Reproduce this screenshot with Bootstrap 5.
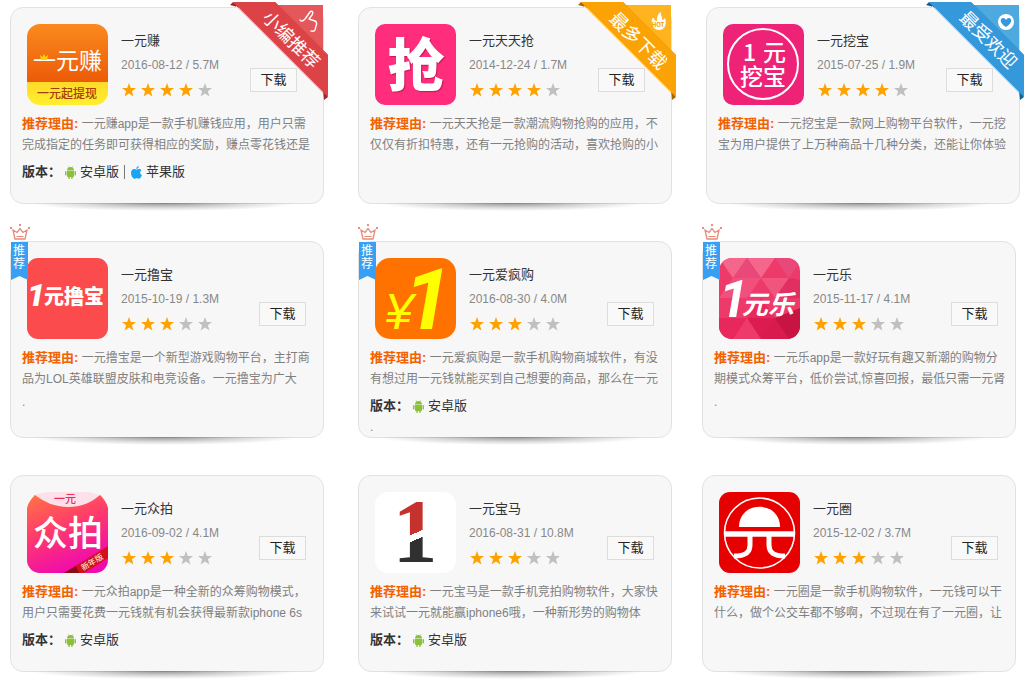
<!DOCTYPE html>
<html lang="zh-CN">
<head>
<meta charset="utf-8">
<meta name="viewport" content="width=device-width, initial-scale=1">
<title>一元购应用推荐</title>
<link href="https://cdn.jsdelivr.net/npm/bootstrap@5.3.0/dist/css/bootstrap.min.css" rel="stylesheet">
<style>
body{font-family:"Liberation Sans","Noto Sans CJK SC",sans-serif;font-size:12px;line-height:21px;color:#333;background:#fff}
.app-page{padding:7px 8px 13px 10px}
.app-rows{gap:37px}
.app-row{gap:34px}
.app-row-tight{gap:30px;padding-right:4px}
.app-card{flex:1 1 0;min-width:0;min-height:197px;background:#f7f7f7;border:1px solid #e2e2e2;border-radius:13px;padding:16px 9px 0 11px}
.app-card::after{content:"";position:absolute;top:100%;left:6%;right:8%;height:8px;background:radial-gradient(ellipse 50% 100% at 50% 0,rgba(0,0,0,.42),rgba(0,0,0,.14) 60%,transparent)}
.app-head{padding-left:5px}
.app-icon{width:81px;height:81px;flex:none}
.app-info{padding-top:4px;margin-left:13px}
.app-name{font-size:13px;line-height:25px;color:#333;font-weight:400}
.app-meta{line-height:25px;color:#888}
.app-stars{height:24px;gap:5px;padding-left:1px}
.app-stars svg{width:14px;height:14px;fill:#ffa200}
.app-stars svg.off{fill:#c0c0c0}
.app-get{width:47px;height:24px;margin:44px 8px 0 auto;border:1px solid #ddd;border-radius:0;background:#f9f9f9;color:#222;font-size:13px;line-height:20px;padding:0;flex:none}
.has-ribbon .app-get{margin-right:17px}
.app-desc{margin:8px 0 0;color:#808080}
.app-desc strong{font-size:13px;color:#f26200}
.app-ver{margin-top:4px;font-size:13px;line-height:24px;gap:4px}
.app-ver a{gap:4px;color:#333}
.app-ver svg{width:11px;height:13px}
.app-bar{width:1px;height:14px;background:#777;margin:0 2px 0 1px}
.app-dot{line-height:18px;margin-top:3px;color:#888}
.app-ver + .app-dot{margin-top:0}
.app-ribbon{position:absolute;top:-8px;right:-5px;width:100px;height:100px;pointer-events:none}
.app-flag{position:absolute;top:-18px;left:-1px;width:20px;height:56px}
svg text{font-family:"Noto Sans CJK SC",sans-serif}
svg text.num{font-family:Roboto,sans-serif}
</style>
</head>
<body>
<svg width="0" height="0" class="position-absolute" aria-hidden="true">
  <defs>
    <symbol id="star" viewBox="0 0 14 14"><path d="M7 0l1.8 4.9 5.2.2-4.100 3.200 1.500 5.200L7 10.600l-4.400 2.900 1.500-5.200L0 5.100l5.200-.2z"/></symbol>
    <symbol id="android" viewBox="0 0 11 13"><g fill="#8cbf3a"><path d="M2 4.500a3.500 3.500 0 0 1 7 0zM2 5h7v5a1 1 0 0 1-1 1H3a1 1 0 0 1-1-1z"/><rect y="5" width="1.500" height="4.500" rx=".7"/><rect x="9.500" y="5" width="1.500" height="4.500" rx=".7"/><rect x="3.300" y="10" width="1.500" height="3" rx=".7"/><rect x="6.200" y="10" width="1.500" height="3" rx=".7"/></g><path d="M3 .3l1 1.500M8 .3l-1 1.500" stroke="#8cbf3a" stroke-width=".6"/></symbol>
    <symbol id="apple" viewBox="0 0 11 13"><path fill="#1ba5f2" d="M7.700 0C7.800 1.600 6.700 2.900 5.300 3 5.200 1.500 6.300.3 7.700 0zM5.600 3.700C6.300 3.700 7 3.100 8.200 3.100c.9 0 1.800.5 2.300 1.200-2 1.200-1.700 3.900.5 4.800-.6 1.700-1.700 3.700-2.900 3.700-.9 0-1.200-.5-2.200-.5s-1.400.5-2.200.5C2 12.800 0 9.500 0 6.900 0 4.400 1.600 3.100 3.100 3.100c1.100 0 1.900.6 2.500.6z"/></symbol>
    <symbol id="flag" viewBox="0 0 20 56">
      <path d="M3 6l4 2.500L10 4.500l3 4L17 6l-2 9H5z" fill="none" stroke="#e88a78" stroke-width="1.300"/>
      <path d="M6.500 12.500h7" stroke="#e88a78"/><g fill="#e06a55"><circle cx="10" cy="1" r="1"/><circle cx="1" cy="4" r="1"/><circle cx="19" cy="4" r="1"/></g>
      <path d="M1 18h17v38l-8.500-4L1 56z" fill="#37a0f4"/>
      <text x="3" y="31" font-size="12" fill="#fff">推</text><text x="3" y="44" font-size="12" fill="#fff">荐</text>
    </symbol>
    <linearGradient id="gZhuan" x2="0" y2="1"><stop stop-color="#fa8a1e"/><stop offset="1" stop-color="#ec5a08"/></linearGradient>
    <linearGradient id="gPai" x2=".4" y2="1"><stop stop-color="#ff7544"/><stop offset=".5" stop-color="#ff3a6c"/><stop offset="1" stop-color="#f00cac"/></linearGradient>
    <linearGradient id="gYellow" x2="0" y2="1"><stop stop-color="#ffd92a"/><stop offset="1" stop-color="#fff02c"/></linearGradient>
    <linearGradient id="gOne" gradientUnits="userSpaceOnUse" x1="0" y1="0" x2="42.300" y2="90.600"><stop offset=".543" stop-color="#c5312c"/><stop offset=".543" stop-color="#fff"/><stop offset=".606" stop-color="#fff"/><stop offset=".606" stop-color="#303030"/></linearGradient>
    <clipPath id="tile"><rect width="81" height="81" rx="13"/></clipPath>
  </defs>
</svg>

<main class="app-page">
<div class="app-rows d-flex flex-column">

<div class="app-row d-flex flex-column flex-md-row">
  <article class="app-card has-ribbon position-relative">
    <div class="app-head d-flex align-items-start">
      <svg class="app-icon" viewBox="0 0 81 81"><g clip-path="url(#tile)"><rect width="81" height="59" fill="url(#gZhuan)"/><rect y="58" width="81" height="23" fill="url(#gYellow)"/></g>
        <text x="6" y="45" font-size="23" fill="#fff">一元赚</text><path d="M13 31l2.500 2 1.500-3 1.500 3 2.500-2-1 5h-6z" fill="#ffd400"/>
        <text x="10" y="74" font-size="12" font-weight="500" fill="#a43c08">一元起提现</text></svg>
      <div class="app-info"><h2 class="app-name mb-0">一元赚</h2><div class="app-meta">2016-08-12 / 5.7M</div>
        <div class="app-stars d-flex align-items-center" role="img" aria-label="4 / 5"><svg><use href="#star"/></svg><svg><use href="#star"/></svg><svg><use href="#star"/></svg><svg><use href="#star"/></svg><svg class="off"><use href="#star"/></svg></div></div>
      <button type="button" class="btn app-get">下载</button>
    </div>
    <p class="app-desc"><strong>推荐理由:</strong> 一元赚app是一款手机赚钱应用，用户只需完成指定的任务即可获得相应的奖励，赚点零花钱还是</p>
    <div class="app-ver d-flex align-items-center"><b>版本：</b><a href="#" class="d-flex align-items-center text-decoration-none"><svg><use href="#android"/></svg>安卓版</a><span class="app-bar"></span><a href="#" class="d-flex align-items-center text-decoration-none"><svg><use href="#apple"/></svg>苹果版</a></div>
    <svg class="app-ribbon" viewBox="0 0 100 100">
      <path d="M46 5h49v50z" fill="#e4575a"/><path d="M44 2l56 57v-4L47 2z" fill="#c93c40"/>
      <path d="M2 5l3-3 8 6zM95 90l5 7-4 3z" fill="#a82226"/>
      <path d="M5 2h42l53 53v42z" fill="#dc4347"/><path d="M8 6l87 87" stroke="#f3c8ca" stroke-width="1"/>
      <text transform="translate(63 40) rotate(45)" text-anchor="middle" y="6" font-size="18" fill="#fff">小编推荐</text>
      <path d="M72 20c1 2 3 1 5-1l5-7c2-2 4 0 2 3l-3 4 6 2c2 1 2 3 1 5l-1 4c-1 2-3 1-4 1" fill="none" stroke="#fff" stroke-width="1.400" stroke-linecap="round" stroke-linejoin="round"/></svg>
  </article>

  <article class="app-card has-ribbon position-relative">
    <div class="app-head d-flex align-items-start">
      <svg class="app-icon" viewBox="0 0 81 81"><rect width="81" height="81" rx="10" fill="#ff2d7c"/><text x="41" y="62" text-anchor="middle" font-size="57" font-weight="900" fill="#fff" style="text-shadow:1px 1px 1px #c81558">抢</text></svg>
      <div class="app-info"><h2 class="app-name mb-0">一元天天抢</h2><div class="app-meta">2014-12-24 / 1.7M</div>
        <div class="app-stars d-flex align-items-center" role="img" aria-label="4 / 5"><svg><use href="#star"/></svg><svg><use href="#star"/></svg><svg><use href="#star"/></svg><svg><use href="#star"/></svg><svg class="off"><use href="#star"/></svg></div></div>
      <button type="button" class="btn app-get">下载</button>
    </div>
    <p class="app-desc"><strong>推荐理由:</strong> 一元天天抢是一款潮流购物抢购的应用，不仅仅有折扣特惠，还有一元抢购的活动，喜欢抢购的小</p>
    <svg class="app-ribbon" viewBox="0 0 100 100">
      <path d="M46 5h49v50z" fill="#ffb31f"/><path d="M44 2l56 57v-4L47 2z" fill="#e08e00"/>
      <path d="M2 5l3-3 8 6zM95 90l5 7-4 3z" fill="#a86800"/>
      <path d="M5 2h42l53 53v42z" fill="#fba304"/><path d="M8 6l87 87" stroke="#fde0a8" stroke-width="1"/>
      <text transform="translate(62 41) rotate(45)" text-anchor="middle" y="6" font-size="18" fill="#fff">最多下载</text>
      <path d="M76 19c-1 5 1 11 7 11s8-6 6-12c-1 1-2 2-3 2 1-3-2-5-1-8-4 2-4 6-4 9-2 0-3-1-3-3-1 0-2 0-2 1z" fill="#fff"/>
      <text x="82" y="27" text-anchor="middle" font-size="6" font-weight="700" fill="#f29a00">HOT</text></svg>
  </article>

  <article class="app-card has-ribbon position-relative">
    <div class="app-head d-flex align-items-start">
      <svg class="app-icon" viewBox="0 0 81 81"><rect width="81" height="81" rx="10" fill="#ee2378"/><circle cx="40" cy="40" r="35" fill="none" stroke="#fff" stroke-width="2"/>
        <g fill="#fff" font-size="23" font-weight="500"><text x="20" y="37">1</text><text x="40" y="37">元</text><text x="40" y="61" text-anchor="middle">挖宝</text></g></svg>
      <div class="app-info"><h2 class="app-name mb-0">一元挖宝</h2><div class="app-meta">2015-07-25 / 1.9M</div>
        <div class="app-stars d-flex align-items-center" role="img" aria-label="4 / 5"><svg><use href="#star"/></svg><svg><use href="#star"/></svg><svg><use href="#star"/></svg><svg><use href="#star"/></svg><svg class="off"><use href="#star"/></svg></div></div>
      <button type="button" class="btn app-get">下载</button>
    </div>
    <p class="app-desc"><strong>推荐理由:</strong> 一元挖宝是一款网上购物平台软件，一元挖宝为用户提供了上万种商品十几种分类，还能让你体验</p>
    <svg class="app-ribbon" viewBox="0 0 100 100">
      <path d="M46 5h49v50z" fill="#4ea9de"/><path d="M44 2l56 57v-4L47 2z" fill="#2480ba"/>
      <path d="M2 5l3-3 8 6zM95 90l5 7-4 3z" fill="#155f90"/>
      <path d="M5 2h42l53 53v42z" fill="#3498db"/><path d="M8 6l87 87" stroke="#c0e0f5" stroke-width="1"/>
      <text transform="translate(64 40) rotate(45)" text-anchor="middle" y="6" font-size="18" fill="#fff">最受欢迎</text>
      <circle cx="82" cy="22" r="8" fill="#fff"/><path d="M82 27c-8-5-5-9-3-9 2 0 3 2 3 2s1-2 3-2 5 4-3 9z" fill="#3498db"/></svg>
  </article>
</div>

<div class="app-row app-row-tight d-flex flex-column flex-md-row">
  <article class="app-card position-relative">
    <div class="app-head d-flex align-items-start">
      <svg class="app-icon" viewBox="0 0 81 81"><rect width="81" height="81" rx="11" fill="#fb4b4c"/><g fill="#fff" font-weight="900"><text class="num" x="0" y="48" font-size="32" font-style="italic">1</text><text x="17" y="46" font-size="20">元撸宝</text></g></svg>
      <div class="app-info"><h2 class="app-name mb-0">一元撸宝</h2><div class="app-meta">2015-10-19 / 1.3M</div>
        <div class="app-stars d-flex align-items-center" role="img" aria-label="3 / 5"><svg><use href="#star"/></svg><svg><use href="#star"/></svg><svg><use href="#star"/></svg><svg class="off"><use href="#star"/></svg><svg class="off"><use href="#star"/></svg></div></div>
      <button type="button" class="btn app-get">下载</button>
    </div>
    <p class="app-desc"><strong>推荐理由:</strong> 一元撸宝是一个新型游戏购物平台，主打商品为LOL英雄联盟皮肤和电竞设备。一元撸宝为广大</p>
    <div class="app-dot">.</div>
    <svg class="app-flag"><use href="#flag"/></svg>
  </article>

  <article class="app-card position-relative ms-md-1">
    <div class="app-head d-flex align-items-start">
      <svg class="app-icon" viewBox="0 0 81 81"><rect width="81" height="81" rx="15" fill="#ff7200"/><g fill="#ff0" font-style="italic"><text x="10" y="71" font-size="50" style="font-family:'Liberation Sans',sans-serif">¥</text><text class="num" x="29" y="71" font-size="85" font-weight="700">1</text></g></svg>
      <div class="app-info"><h2 class="app-name mb-0">一元爱疯购</h2><div class="app-meta">2016-08-30 / 4.0M</div>
        <div class="app-stars d-flex align-items-center" role="img" aria-label="3 / 5"><svg><use href="#star"/></svg><svg><use href="#star"/></svg><svg><use href="#star"/></svg><svg class="off"><use href="#star"/></svg><svg class="off"><use href="#star"/></svg></div></div>
      <button type="button" class="btn app-get">下载</button>
    </div>
    <p class="app-desc"><strong>推荐理由:</strong> 一元爱疯购是一款手机购物商城软件，有没有想过用一元钱就能买到自己想要的商品，那么在一元</p>
    <div class="app-ver d-flex align-items-center"><b>版本：</b><a href="#" class="d-flex align-items-center text-decoration-none"><svg><use href="#android"/></svg>安卓版</a></div>
    <div class="app-dot">.</div>
    <svg class="app-flag"><use href="#flag"/></svg>
  </article>

  <article class="app-card position-relative">
    <div class="app-head d-flex align-items-start">
      <svg class="app-icon" viewBox="0 0 81 81"><g clip-path="url(#tile)"><rect width="81" height="81" fill="#ee3a6b"/>
        <path d="M0 0h28L14 20zM28 0l14 20L56 0z" fill="#f4668b"/><path d="M14 20h28L28 0zM56 0l14 20L81 4V0z" fill="#e8497a"/><path d="M42 20l14 20 14-20z" fill="#f0557e"/><path d="M0 40l14-20 14 20zM14 20h28L28 40z" fill="#f2507c"/><path d="M56 40h25V22l-11-2z" fill="#e02f60"/><path d="M0 60h28L14 81H0zM28 60l14-20 14 20z" fill="#e8285c"/><path d="M28 60h28L42 81z" fill="#dc1c50"/><path d="M56 60l25-10v31H42z" fill="#c81443"/><path d="M56 60l14 21H42z" fill="#d91a4c"/></g>
        <g fill="#fff" font-style="italic" font-weight="700"><text class="num" x="0" y="59" font-size="52">1</text><text x="23" y="56" font-size="26">元乐</text></g></svg>
      <div class="app-info"><h2 class="app-name mb-0">一元乐</h2><div class="app-meta">2015-11-17 / 4.1M</div>
        <div class="app-stars d-flex align-items-center" role="img" aria-label="3 / 5"><svg><use href="#star"/></svg><svg><use href="#star"/></svg><svg><use href="#star"/></svg><svg class="off"><use href="#star"/></svg><svg class="off"><use href="#star"/></svg></div></div>
      <button type="button" class="btn app-get">下载</button>
    </div>
    <p class="app-desc"><strong>推荐理由:</strong> 一元乐app是一款好玩有趣又新潮的购物分期模式众筹平台，低价尝试,惊喜回报，最低只需一元肾</p>
    <div class="app-dot">.</div>
    <svg class="app-flag"><use href="#flag"/></svg>
  </article>
</div>

<div class="app-row app-row-tight d-flex flex-column flex-md-row">
  <article class="app-card position-relative">
    <div class="app-head d-flex align-items-start">
      <svg class="app-icon" viewBox="0 0 81 81"><g clip-path="url(#tile)"><path d="M6 3L20 0h42l14 4-12 14H20z" fill="#fde0ea"/><path d="M0 16C1 11 4 7 8 3c9 7 20 12 33 12S64 11 73 3c4 4 7 8 8 13v65H0z" fill="url(#gPai)"/><path d="M37 81L81 54v12L57 81z" fill="#d3101c"/><path d="M37 81l12-7 3 7z" fill="#8e0a12"/></g>
        <text x="38" y="11" text-anchor="middle" font-size="11" font-weight="500" fill="#ee2a5c">一元</text><text x="41" y="54" text-anchor="middle" font-size="35" font-weight="500" fill="#fff">众拍</text>
        <text transform="translate(65 70) rotate(-31)" text-anchor="middle" y="3" font-size="8" font-weight="500" fill="#ffd9c0">新年版</text></svg>
      <div class="app-info"><h2 class="app-name mb-0">一元众拍</h2><div class="app-meta">2016-09-02 / 4.1M</div>
        <div class="app-stars d-flex align-items-center" role="img" aria-label="3 / 5"><svg><use href="#star"/></svg><svg><use href="#star"/></svg><svg><use href="#star"/></svg><svg class="off"><use href="#star"/></svg><svg class="off"><use href="#star"/></svg></div></div>
      <button type="button" class="btn app-get">下载</button>
    </div>
    <p class="app-desc"><strong>推荐理由:</strong> 一元众拍app是一种全新的众筹购物模式，用户只需要花费一元钱就有机会获得最新款iphone 6s</p>
    <div class="app-ver d-flex align-items-center"><b>版本：</b><a href="#" class="d-flex align-items-center text-decoration-none"><svg><use href="#android"/></svg>安卓版</a></div>
  </article>

  <article class="app-card position-relative ms-md-1">
    <div class="app-head d-flex align-items-start">
      <svg class="app-icon" viewBox="0 0 81 81"><rect width="81" height="81" rx="13" fill="#fff"/>
        <text x="40" y="70" font-size="90" font-weight="700" text-anchor="middle" fill="url(#gOne)" style="font-family:'Liberation Serif',serif">1</text></svg>
      <div class="app-info"><h2 class="app-name mb-0">一元宝马</h2><div class="app-meta">2016-08-31 / 10.8M</div>
        <div class="app-stars d-flex align-items-center" role="img" aria-label="3 / 5"><svg><use href="#star"/></svg><svg><use href="#star"/></svg><svg><use href="#star"/></svg><svg class="off"><use href="#star"/></svg><svg class="off"><use href="#star"/></svg></div></div>
      <button type="button" class="btn app-get">下载</button>
    </div>
    <p class="app-desc"><strong>推荐理由:</strong> 一元宝马是一款手机竞拍购物软件，大家快来试试一元就能赢iphone6哦，一种新形势的购物体</p>
    <div class="app-ver d-flex align-items-center"><b>版本：</b><a href="#" class="d-flex align-items-center text-decoration-none"><svg><use href="#android"/></svg>安卓版</a></div>
  </article>

  <article class="app-card position-relative">
    <div class="app-head d-flex align-items-start">
      <svg class="app-icon" viewBox="0 0 81 81"><rect width="81" height="81" rx="11" fill="#e60000"/><g fill="none" stroke="#fff"><circle cx="40.500" cy="41" r="35" stroke-width="1.600"/><path d="M6 42h69" stroke-width="5.500"/><path d="M31 43v10c0 7-4 11-16 11M50 43v10c0 7 4 11 16 11" stroke-width="5"/></g><path d="M20 35C20 8 61 8 61 35z" fill="#fff"/></svg>
      <div class="app-info"><h2 class="app-name mb-0">一元圈</h2><div class="app-meta">2015-12-02 / 3.7M</div>
        <div class="app-stars d-flex align-items-center" role="img" aria-label="3 / 5"><svg><use href="#star"/></svg><svg><use href="#star"/></svg><svg><use href="#star"/></svg><svg class="off"><use href="#star"/></svg><svg class="off"><use href="#star"/></svg></div></div>
      <button type="button" class="btn app-get">下载</button>
    </div>
    <p class="app-desc"><strong>推荐理由:</strong> 一元圈是一款手机购物软件，一元钱可以干什么，做个公交车都不够啊，不过现在有了一元圈，让</p>
  </article>
</div>

</div>
</main>
<script src="https://cdn.jsdelivr.net/npm/bootstrap@5.3.0/dist/js/bootstrap.bundle.min.js"></script>
</body>
</html>
